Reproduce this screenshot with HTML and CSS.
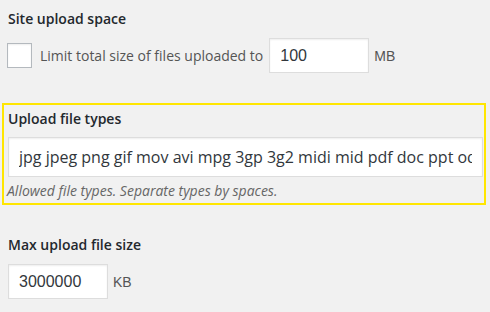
FILE: index.html
```html
<!DOCTYPE html>
<html>
<head>
<meta charset="utf-8">
<link rel="stylesheet" href="styles.css">
</head>
<body>
<div class="field">
  <h3 class="field-title">Site upload space</h3>
  <div class="row">
    <span class="checkbox"></span>
    <span class="label">Limit total size of files uploaded to</span>
    <input class="num-input" type="text" value="100">
    <span class="unit">MB</span>
  </div>
</div>

<div class="highlight">
  <h3 class="field-title">Upload file types</h3>
  <input class="types-input" type="text" value="jpg jpeg png gif mov avi mpg 3gp 3g2 midi mid pdf doc ppt odt pptx docx pps ppsx xls xlsx key mp3 ogg flac m4a wav mp4 m4v webm ogv flv">
  <p class="description">Allowed file types. Separate types by spaces.</p>
</div>

<div class="field field-last">
  <h3 class="field-title">Max upload file size</h3>
  <div class="row row-size">
    <input class="num-input num-input-size" type="text" value="3000000">
    <span class="unit unit-kb">KB</span>
  </div>
</div>
</body>
</html>
```

FILE: styles.css
```css
html, body {
  margin: 0;
  padding: 0;
  background: #f1f1f1;
}
body {
  width: 490px;
  height: 312px;
  overflow: hidden;
  font-family: "Open Sans", "Noto Sans", sans-serif;
  color: #444;
}
.field {
  padding-left: 7px;
}
.field-title {
  margin: 0;
  padding-top: 9px;
  padding-left: 1px;
  font-size: 14px;
  font-weight: 600;
  line-height: 20px;
  color: #23282d;
}
.row {
  display: flex;
  align-items: center;
  margin-top: 9px;
  height: 35px;
}
.checkbox {
  width: 25px;
  height: 25px;
  box-sizing: border-box;
  border: 1px solid #b4b9be;
  background: #fff;
  box-shadow: inset 0 1px 2px rgba(0,0,0,0.07);
  flex: none;
}
.label {
  margin-left: 8px;
  font-size: 14px;
  color: #555;
}
.num-input {
  margin: 0 0 0 6px;
  width: 100px;
  height: 35px;
  box-sizing: border-box;
  border: 1px solid #ddd;
  box-shadow: inset 0 1px 2px rgba(0,0,0,0.07);
  background: #fff;
  padding: 0 10px;
  font-family: "Liberation Sans", Arial, sans-serif;
  font-size: 16px;
  color: #32373c;
  outline: none;
}
.unit {
  margin-left: 5px;
  font-family: "Liberation Sans", Arial, sans-serif;
  font-size: 14px;
  color: #555;
}
.highlight {
  margin: 30px 0 0 2px;
  width: 484px;
  box-sizing: border-box;
  border: 2px solid #ffe600;
  padding: 0 0 2px 4px;
}
.highlight .field-title {
  padding-top: 4px;
  padding-left: 0;
}
.types-input {
  display: block;
  margin: 8px 0 0 0;
  width: 475px;
  height: 40px;
  box-sizing: border-box;
  border: 1px solid #ddd;
  box-shadow: inset 0 1px 2px rgba(0,0,0,0.07);
  background: #fff;
  padding: 0 10px;
  font-family: "Open Sans", "Noto Sans", sans-serif;
  font-size: 16px;
  color: #32373c;
  outline: none;
}
.description {
  margin: 3px 0 0 -1px;
  font-size: 14px;
  line-height: 21px;
  font-style: italic;
  color: #666;
}
.field-last .field-title {
  padding-top: 0;
  margin-top: 30px;
}
.field-last {
  padding-left: 7px;
}
.row-size {
  margin-top: 9px;
}
.num-input-size {
  margin-left: 1px;
}
.unit-kb {
  margin-left: 5px;
}
```
